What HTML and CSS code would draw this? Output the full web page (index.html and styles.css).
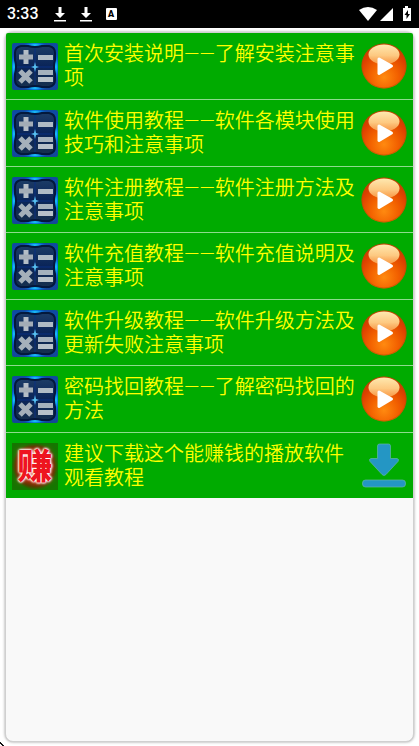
FILE: index.html
```
<!DOCTYPE html>
<html lang="zh-CN">
<head>
<meta charset="utf-8">
<meta name="viewport" content="width=device-width, initial-scale=1">
<title>教程</title>
<link rel="stylesheet" href="styles.css">
</head>
<body>
<svg class="defs" aria-hidden="true">
  <defs>
    <linearGradient id="frame" x1="0" y1="0" x2="0" y2="1">
      <stop offset="0" stop-color="#104a9c"/><stop offset=".5" stop-color="#0753c8"/><stop offset="1" stop-color="#144694"/>
    </linearGradient>
    <radialGradient id="glow">
      <stop offset="0" stop-color="#20d8ff"/><stop offset=".5" stop-color="#0a8cf0" stop-opacity=".8"/><stop offset="1" stop-color="#0753c8" stop-opacity="0"/>
    </radialGradient>
    <linearGradient id="panel" x1="0" y1="0" x2="0" y2="1">
      <stop offset="0" stop-color="#1c3c66"/><stop offset=".5" stop-color="#0a2458"/><stop offset="1" stop-color="#16304e"/>
    </linearGradient>
    <radialGradient id="orb" cx=".5" cy=".75" r=".75">
      <stop offset="0" stop-color="#ff8a10"/><stop offset=".4" stop-color="#f36200"/><stop offset=".75" stop-color="#dc4000"/><stop offset="1" stop-color="#c43c00"/>
    </radialGradient>
    <linearGradient id="shine" x1="0" y1="0" x2="0" y2="1">
      <stop offset="0" stop-color="#ffe9b0"/><stop offset=".55" stop-color="#ffd088" stop-opacity=".95"/><stop offset="1" stop-color="#ffb868" stop-opacity=".65"/>
    </linearGradient>
    <symbol id="calc" viewBox="0 0 46 47">
      <rect width="46" height="47" rx="2" fill="url(#frame)"/>
      <ellipse cx="23" cy="2" rx="12" ry="3" fill="url(#glow)"/>
      <ellipse cx="23" cy="45" rx="12" ry="3" fill="url(#glow)"/>
      <ellipse cx="2" cy="24" rx="3" ry="13" fill="url(#glow)"/>
      <ellipse cx="44" cy="24" rx="3" ry="13" fill="url(#glow)"/>
      <path d="M9 3H16Q23 5 30 3H37Q43 4 43 10V17Q41 24 43 31V37Q43 43 37 44H30Q23 42 16 44H9Q3 43 3 37V31Q5 24 3 17V10Q3 4 9 3Z" fill="url(#panel)" stroke="#03183c" stroke-width="2"/>
      <path d="M23 5V42M5 24H41" stroke="#0a3080" stroke-width="1"/>
      <path d="M14 7V21" stroke="#b4bdc6" stroke-width="5"/>
      <path d="M7 14H21" stroke="#a4adb7" stroke-width="5"/>
      <path d="M8 28L19 39M19 28L8 39" stroke="#a5b0ba" stroke-width="5"/>
      <rect x="26" y="12" width="15" height="5" fill="#b0bbc5"/>
      <rect x="26" y="27" width="15" height="5" fill="#a5b1bd"/>
      <rect x="26" y="34" width="15" height="5" fill="#b8c1c9"/>
      <path d="M23 19L24 23L27 24L24 25L23 29L22 25L19 24L22 23Z" fill="#58c0f0"/>
    </symbol>
    <symbol id="play" viewBox="0 0 46 46">
      <circle cx="23" cy="23" r="22.500" fill="url(#orb)"/>
      <circle cx="23" cy="23" r="22" fill="none" stroke="#a55200" stroke-opacity=".5"/>
      <ellipse cx="23" cy="11.500" rx="15.500" ry="10" fill="url(#shine)"/>
      <path d="M18 16L30.500 23L18 30.500Z" fill="#fff" stroke="#fff" stroke-width="3" stroke-linejoin="round"/>
    </symbol>
    <symbol id="status-download" viewBox="0 0 12 16">
      <path d="M4.500 1H7.500V7H11L6 12L1 7H4.500ZM0 14H12V15.500H0Z" fill="#fff"/>
    </symbol>
  </defs>
</svg>

<header class="status">
  <time class="clock">3:33</time>
  <svg class="status-down"><use href="#status-download"/></svg>
  <svg class="status-down"><use href="#status-download"/></svg>
  <span class="badge">A</span>
  <svg class="signals" viewBox="0 0 54 16" aria-hidden="true">
    <path d="M0 4Q9 -2 18 4L9 15Z" fill="#fff"/>
    <path d="M21 15L34 2V15Z" fill="#fff"/>
    <path d="M46 0H49V2H52V15H44V2H46Z" fill="#fff"/>
    <path d="M49 4L45.500 9H47.500V13L51 8H49Z" fill="#000"/>
  </svg>
</header>

<main class="card">
  <ul class="list">
    <li><a class="row" href="#install"><svg class="thumb"><use href="#calc"/></svg><span class="title">首次安装说明——了解安装注意事项</span><svg class="action"><use href="#play"/></svg></a></li>
    <li><a class="row" href="#usage"><svg class="thumb"><use href="#calc"/></svg><span class="title">软件使用教程——软件各模块使用技巧和注意事项</span><svg class="action"><use href="#play"/></svg></a></li>
    <li><a class="row" href="#register"><svg class="thumb"><use href="#calc"/></svg><span class="title">软件注册教程——软件注册方法及注意事项</span><svg class="action"><use href="#play"/></svg></a></li>
    <li><a class="row" href="#recharge"><svg class="thumb"><use href="#calc"/></svg><span class="title">软件充值教程——软件充值说明及注意事项</span><svg class="action"><use href="#play"/></svg></a></li>
    <li><a class="row" href="#upgrade"><svg class="thumb"><use href="#calc"/></svg><span class="title">软件升级教程——软件升级方法及更新失败注意事项</span><svg class="action"><use href="#play"/></svg></a></li>
    <li><a class="row" href="#password"><svg class="thumb"><use href="#calc"/></svg><span class="title">密码找回教程——了解密码找回的方法</span><svg class="action"><use href="#play"/></svg></a></li>
    <li><a class="row" href="#player"><span class="thumb earn">赚</span><span class="title">建议下载这个能赚钱的播放软件观看教程</span>
      <svg class="action" viewBox="0 0 46 46">
        <path d="M16.500 3Q16.500 1 18.500 1H27.500Q29.500 1 29.500 3V15.500H36Q38.500 16 37 18.500L25 31.500Q23 33.500 21 31.500L9 18.500Q7.500 16 10 15.500H16.500Z" fill="#2496c4" stroke="#62b5a8" stroke-width=".7"/>
        <rect x="1.500" y="37" width="43" height="7" rx="3" fill="#2496c4" stroke="#62b5a8" stroke-width=".7"/>
      </svg></a></li>
  </ul>
</main>
<svg class="corner" viewBox="0 0 4 4" aria-hidden="true"><path d="M0 0H1V1H2V2H3V3H4V4H2V3H1V2H0Z" fill="#111"/></svg>
</body>
</html>
```
FILE: styles.css
```
* {
  box-sizing: border-box;
}

body {
  position: relative;
  display: flex;
  flex-direction: column;
  min-height: 100vh;
  margin: 0;
  background: #fff;
  font-family: Roboto, "Noto Sans CJK SC", sans-serif;
}

.defs {
  position: absolute;
  width: 0;
  height: 0;
}

.status {
  display: flex;
  align-items: center;
  height: 28px;
  padding: 0 6px 0 7px;
  background: #000;
  color: #fff;
}

.clock {
  margin-right: 15px;
  font-size: 16px;
  font-weight: 500;
  line-height: 28px;
}

.status-down {
  width: 12px;
  height: 16px;
  margin-right: 14px;
}

.badge {
  width: 11px;
  height: 12px;
  border-radius: 1px;
  background: #fff;
  color: #000;
  font-size: 9px;
  font-weight: 900;
  line-height: 12px;
  text-align: center;
}

.signals {
  width: 54px;
  height: 16px;
  margin-left: auto;
}

.card {
  flex: 1;
  margin: 4px 5px;
  border: 1px solid #d0d0d0;
  border-radius: 8px;
  background: #f9f9f9;
  box-shadow: 0 0 3px #999;
}

.list {
  display: grid;
  grid-auto-rows: 1fr;
  min-height: 465px;
  margin: 0;
  padding: 0;
  border-radius: 2px 2px 0 0;
  list-style: none;
  background: #00ab00;
}

.list li + li {
  border-top: 1px solid #8edb8e;
}

.row {
  display: flex;
  align-items: flex-start;
  height: 100%;
  padding: 10px 6px 0;
  color: #ff0;
  text-decoration: none;
}

.thumb {
  flex: none;
  width: 46px;
  height: 47px;
}

.title {
  flex: 1;
  margin: -1px 0 0 6px;
  font-size: 20px;
  font-weight: 350;
  line-height: 24px;
}

.action {
  flex: none;
  width: 46px;
  height: 46px;
}

.earn {
  background: radial-gradient(closest-side, #a22800 60%, #563c00 85%, #157600);
  color: #ee1420;
  font-size: 35px;
  font-weight: 900;
  line-height: 50px;
  text-align: center;
  text-shadow: 0 0 2px #fff, 0 0 2px #fff, 0 0 3px #fff, 0 0 3px #fff, 0 0 6px #f33;
}

.corner {
  position: absolute;
  bottom: 0;
  left: 0;
  width: 4px;
  height: 4px;
}
```
